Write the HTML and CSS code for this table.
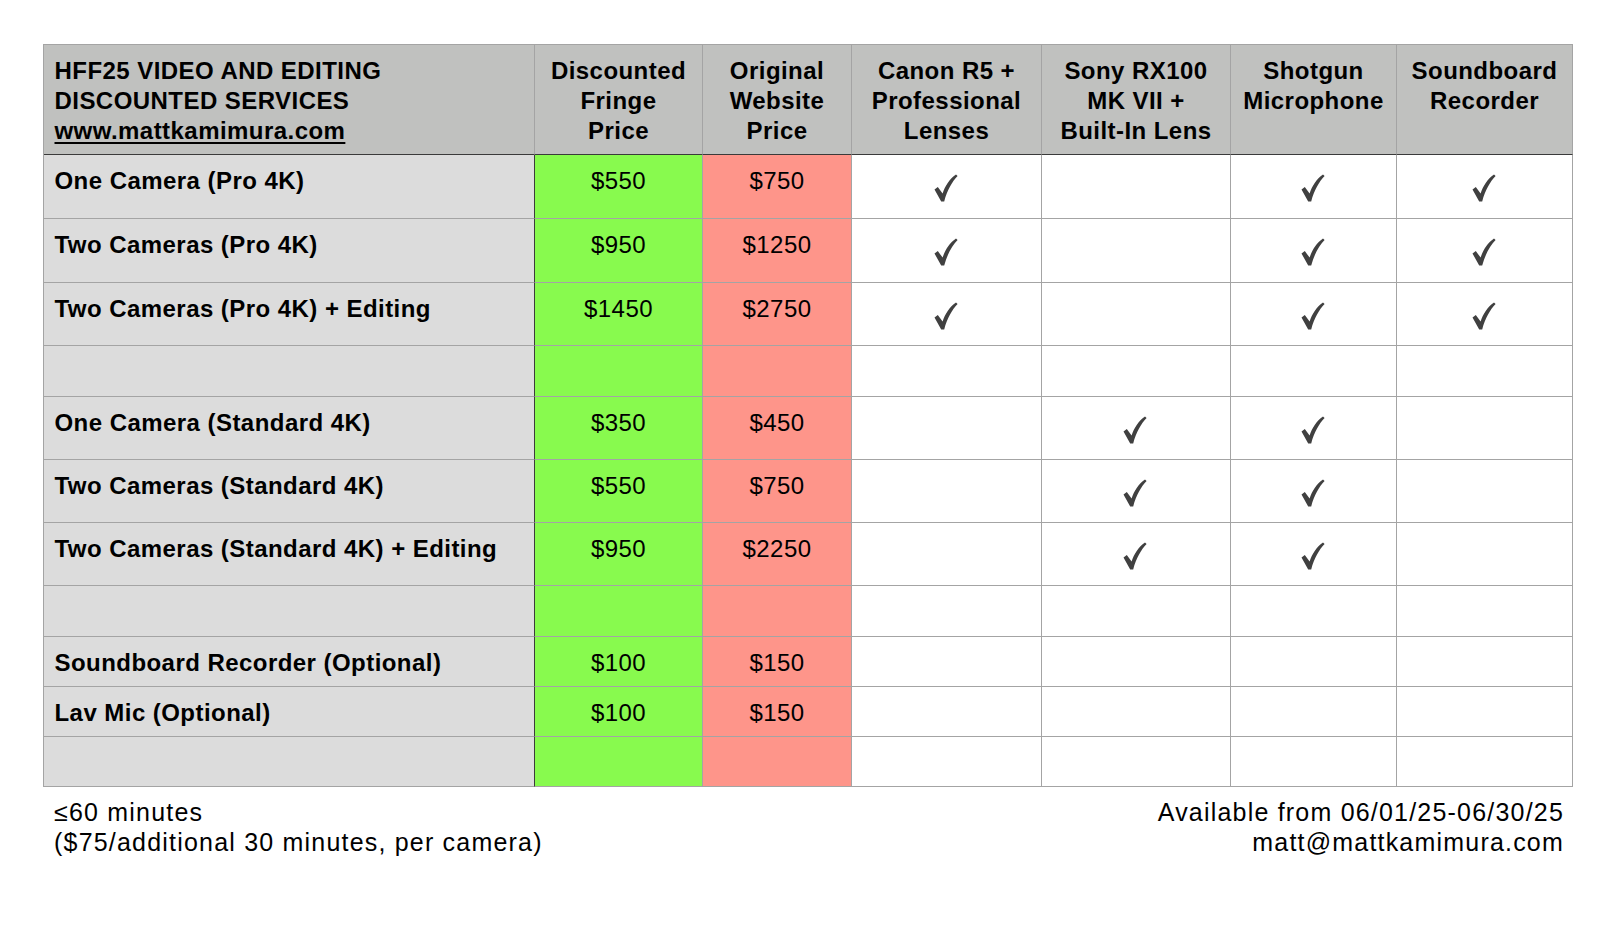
FILE: index.html
```html
<!DOCTYPE html>
<html>
<head>
<meta charset="utf-8">
<title>HFF25 Video and Editing Discounted Services</title>
<link rel="stylesheet" href="styles.css">
</head>
<body>
<div class="sheet">
  <div class="grid">
    <div class="row head">
      <div class="cell title">HFF25 VIDEO AND EDITING<br>DISCOUNTED SERVICES<br><span class="url">www.mattkamimura.com</span></div>
      <div class="cell">Discounted<br>Fringe<br>Price</div>
      <div class="cell">Original<br>Website<br>Price</div>
      <div class="cell">Canon R5 +<br>Professional<br>Lenses</div>
      <div class="cell">Sony RX100<br>MK VII +<br>Built-In Lens</div>
      <div class="cell">Shotgun<br>Microphone</div>
      <div class="cell">Soundboard<br>Recorder</div>
    </div>

    <div class="row r64">
      <div class="cell label">One Camera (Pro 4K)</div>
      <div class="cell disc">$550</div>
      <div class="cell orig">$750</div>
      <div class="cell mark"><svg class="check" viewBox="0 0 24 28"><path d="M0.5 15.5 L3.8 13 L8.6 19.6 C11 12.2 15.4 5.2 22 0.6 L23.6 2.1 C18 8 13.2 16.2 10.2 27.4 L7.2 27.6 Z"/></svg></div>
      <div class="cell"></div>
      <div class="cell mark"><svg class="check" viewBox="0 0 24 28"><path d="M0.5 15.5 L3.8 13 L8.6 19.6 C11 12.2 15.4 5.2 22 0.6 L23.6 2.1 C18 8 13.2 16.2 10.2 27.4 L7.2 27.6 Z"/></svg></div>
      <div class="cell mark"><svg class="check" viewBox="0 0 24 28"><path d="M0.5 15.5 L3.8 13 L8.6 19.6 C11 12.2 15.4 5.2 22 0.6 L23.6 2.1 C18 8 13.2 16.2 10.2 27.4 L7.2 27.6 Z"/></svg></div>
    </div>

    <div class="row r64">
      <div class="cell label">Two Cameras (Pro 4K)</div>
      <div class="cell disc">$950</div>
      <div class="cell orig">$1250</div>
      <div class="cell mark"><svg class="check" viewBox="0 0 24 28"><path d="M0.5 15.5 L3.8 13 L8.6 19.6 C11 12.2 15.4 5.2 22 0.6 L23.6 2.1 C18 8 13.2 16.2 10.2 27.4 L7.2 27.6 Z"/></svg></div>
      <div class="cell"></div>
      <div class="cell mark"><svg class="check" viewBox="0 0 24 28"><path d="M0.5 15.5 L3.8 13 L8.6 19.6 C11 12.2 15.4 5.2 22 0.6 L23.6 2.1 C18 8 13.2 16.2 10.2 27.4 L7.2 27.6 Z"/></svg></div>
      <div class="cell mark"><svg class="check" viewBox="0 0 24 28"><path d="M0.5 15.5 L3.8 13 L8.6 19.6 C11 12.2 15.4 5.2 22 0.6 L23.6 2.1 C18 8 13.2 16.2 10.2 27.4 L7.2 27.6 Z"/></svg></div>
    </div>

    <div class="row r63">
      <div class="cell label">Two Cameras (Pro 4K) + Editing</div>
      <div class="cell disc">$1450</div>
      <div class="cell orig">$2750</div>
      <div class="cell mark"><svg class="check" viewBox="0 0 24 28"><path d="M0.5 15.5 L3.8 13 L8.6 19.6 C11 12.2 15.4 5.2 22 0.6 L23.6 2.1 C18 8 13.2 16.2 10.2 27.4 L7.2 27.6 Z"/></svg></div>
      <div class="cell"></div>
      <div class="cell mark"><svg class="check" viewBox="0 0 24 28"><path d="M0.5 15.5 L3.8 13 L8.6 19.6 C11 12.2 15.4 5.2 22 0.6 L23.6 2.1 C18 8 13.2 16.2 10.2 27.4 L7.2 27.6 Z"/></svg></div>
      <div class="cell mark"><svg class="check" viewBox="0 0 24 28"><path d="M0.5 15.5 L3.8 13 L8.6 19.6 C11 12.2 15.4 5.2 22 0.6 L23.6 2.1 C18 8 13.2 16.2 10.2 27.4 L7.2 27.6 Z"/></svg></div>
    </div>

    <div class="row r51">
      <div class="cell label"></div>
      <div class="cell disc"></div>
      <div class="cell orig"></div>
      <div class="cell"></div>
      <div class="cell"></div>
      <div class="cell"></div>
      <div class="cell"></div>
    </div>

    <div class="row r63">
      <div class="cell label">One Camera (Standard 4K)</div>
      <div class="cell disc">$350</div>
      <div class="cell orig">$450</div>
      <div class="cell"></div>
      <div class="cell mark"><svg class="check" viewBox="0 0 24 28"><path d="M0.5 15.5 L3.8 13 L8.6 19.6 C11 12.2 15.4 5.2 22 0.6 L23.6 2.1 C18 8 13.2 16.2 10.2 27.4 L7.2 27.6 Z"/></svg></div>
      <div class="cell mark"><svg class="check" viewBox="0 0 24 28"><path d="M0.5 15.5 L3.8 13 L8.6 19.6 C11 12.2 15.4 5.2 22 0.6 L23.6 2.1 C18 8 13.2 16.2 10.2 27.4 L7.2 27.6 Z"/></svg></div>
      <div class="cell"></div>
    </div>

    <div class="row r63">
      <div class="cell label">Two Cameras (Standard 4K)</div>
      <div class="cell disc">$550</div>
      <div class="cell orig">$750</div>
      <div class="cell"></div>
      <div class="cell mark"><svg class="check" viewBox="0 0 24 28"><path d="M0.5 15.5 L3.8 13 L8.6 19.6 C11 12.2 15.4 5.2 22 0.6 L23.6 2.1 C18 8 13.2 16.2 10.2 27.4 L7.2 27.6 Z"/></svg></div>
      <div class="cell mark"><svg class="check" viewBox="0 0 24 28"><path d="M0.5 15.5 L3.8 13 L8.6 19.6 C11 12.2 15.4 5.2 22 0.6 L23.6 2.1 C18 8 13.2 16.2 10.2 27.4 L7.2 27.6 Z"/></svg></div>
      <div class="cell"></div>
    </div>

    <div class="row r63">
      <div class="cell label">Two Cameras (Standard 4K) + Editing</div>
      <div class="cell disc">$950</div>
      <div class="cell orig">$2250</div>
      <div class="cell"></div>
      <div class="cell mark"><svg class="check" viewBox="0 0 24 28"><path d="M0.5 15.5 L3.8 13 L8.6 19.6 C11 12.2 15.4 5.2 22 0.6 L23.6 2.1 C18 8 13.2 16.2 10.2 27.4 L7.2 27.6 Z"/></svg></div>
      <div class="cell mark"><svg class="check" viewBox="0 0 24 28"><path d="M0.5 15.5 L3.8 13 L8.6 19.6 C11 12.2 15.4 5.2 22 0.6 L23.6 2.1 C18 8 13.2 16.2 10.2 27.4 L7.2 27.6 Z"/></svg></div>
      <div class="cell"></div>
    </div>

    <div class="row r51">
      <div class="cell label"></div>
      <div class="cell disc"></div>
      <div class="cell orig"></div>
      <div class="cell"></div>
      <div class="cell"></div>
      <div class="cell"></div>
      <div class="cell"></div>
    </div>

    <div class="row r50">
      <div class="cell label">Soundboard Recorder (Optional)</div>
      <div class="cell disc">$100</div>
      <div class="cell orig">$150</div>
      <div class="cell"></div>
      <div class="cell"></div>
      <div class="cell"></div>
      <div class="cell"></div>
    </div>

    <div class="row r50">
      <div class="cell label">Lav Mic (Optional)</div>
      <div class="cell disc">$100</div>
      <div class="cell orig">$150</div>
      <div class="cell"></div>
      <div class="cell"></div>
      <div class="cell"></div>
      <div class="cell"></div>
    </div>

    <div class="row r50">
      <div class="cell label"></div>
      <div class="cell disc"></div>
      <div class="cell orig"></div>
      <div class="cell"></div>
      <div class="cell"></div>
      <div class="cell"></div>
      <div class="cell"></div>
    </div>
  </div>

  <div class="footer">
    <div class="note">≤60 minutes<br>($75/additional 30 minutes, per camera)</div>
    <div class="contact">Available from 06/01/25-06/30/25<br>matt@mattkamimura.com</div>
  </div>
</div>
</body>
</html>
```

FILE: styles.css
```css
html, body {
  margin: 0;
  padding: 0;
  background: #ffffff;
}

body {
  font-family: "Liberation Sans", Arial, Helvetica, sans-serif;
  color: #000000;
}

.sheet {
  padding: 44px 0 0 43px;
  width: 1530px;
}

.grid {
  width: 1530px;
  box-sizing: border-box;
  border-top: 1px solid #a4a4a4;
  border-left: 1px solid #a4a4a4;
}

.row {
  display: grid;
  grid-template-columns: 491px 168px 149px 190px 189px 166px 176px;
}

.cell {
  box-sizing: border-box;
  border-right: 1px solid #a4a4a4;
  border-bottom: 1px solid #a4a4a4;
  font-size: 24px;
  line-height: 29px;
  letter-spacing: 0.45px;
  overflow: hidden;
  white-space: nowrap;
}

.head {
  height: 110px;
}

.head .cell {
  background: #c0c1bf;
  border-bottom-color: #3a3a3a;
  font-weight: bold;
  text-align: center;
  line-height: 30px;
  padding-top: 10.5px;
}

.head .cell.title {
  text-align: left;
  padding-left: 10.5px;
}

.url {
  text-decoration: underline;
  text-decoration-thickness: 1.5px;
  text-underline-offset: 3px;
}

.r64 { height: 64px; }
.r63 { height: 63px; }
.r51 { height: 51px; }
.r50 { height: 50px; }

.label {
  background: #dcdcdc;
  font-weight: bold;
  padding: 10.5px 0 0 10.5px;
  border-right-color: #3c3c3c;
}

.disc {
  background: #88fa4e;
  text-align: center;
  padding-top: 10.5px;
}

.orig {
  background: #fe958a;
  text-align: center;
  padding-top: 10.5px;
}

.mark {
  display: flex;
  align-items: center;
  justify-content: center;
  padding-top: 3px;
}

.check {
  width: 24px;
  height: 28px;
  fill: #404040;
  margin-left: -2px;
}

.footer {
  display: flex;
  justify-content: space-between;
  box-sizing: border-box;
  width: 1530px;
  padding: 10px 9px 0 11px;
  font-size: 25px;
  line-height: 30px;
  letter-spacing: 1.2px;
}

.contact {
  text-align: right;
}
```
